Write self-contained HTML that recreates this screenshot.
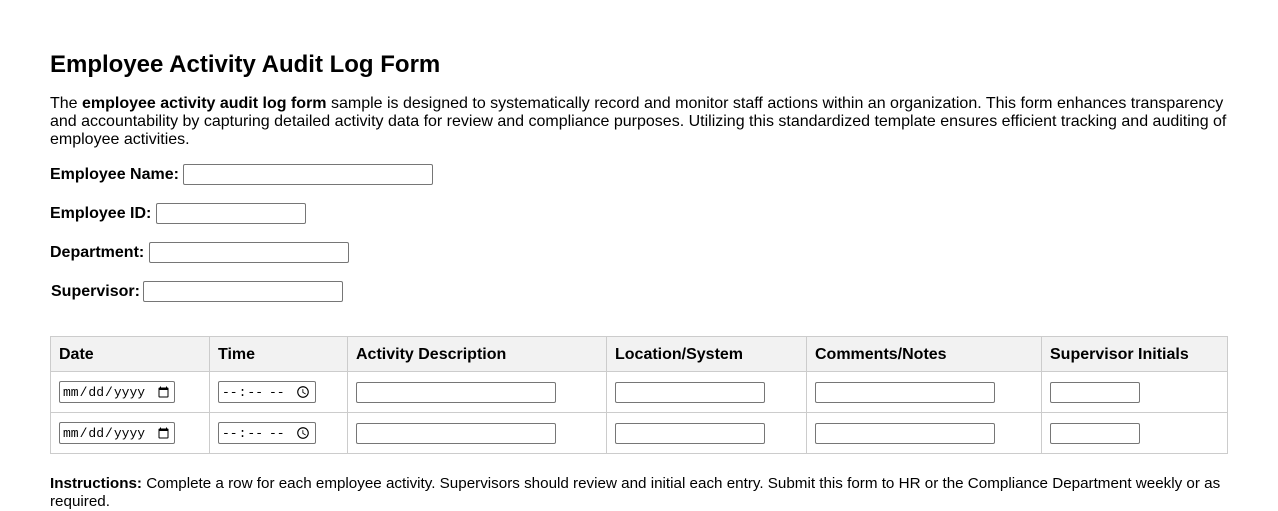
<!DOCTYPE html>
<html><head><meta charset="utf-8"><style>
*{box-sizing:border-box}
body{margin:0;width:1278px;height:501px;overflow:hidden;background:#fff;font-family:"Liberation Sans",Arial,sans-serif;color:#000;position:relative}
h1{position:absolute;left:50px;top:51px;margin:0;font-size:24px;font-weight:bold}
p{position:absolute;left:50px;top:95px;width:1190px;margin:0;font-size:16px;line-height:18px}
.l{position:absolute;font-size:16px;font-weight:bold}
input{position:absolute;height:21px;border:1px solid #767676;border-radius:2px;background:#fff;padding:1px 2px;font-size:13px}
table{position:absolute;left:50px;top:336px;width:1178px;border-collapse:collapse}
td,th{border:1px solid #ccc;padding:0 8px;text-align:left;font-size:16px}
th{background:#f2f2f2;height:35px;font-weight:bold;padding-top:2px}
td{height:41px}
.ins{position:absolute;left:50px;top:475px;width:1180px;font-size:15.2px;line-height:18px}
</style></head><body>
<h1>Employee Activity Audit Log Form</h1>
<p>The <b>employee activity audit log form</b> sample is designed to systematically record and monitor staff actions within an organization. This form enhances transparency and accountability by capturing detailed activity data for review and compliance purposes. Utilizing this standardized template ensures efficient tracking and auditing of employee activities.</p>
<div class="l" style="left:50px;top:166px">Employee Name:</div><input style="left:183px;top:164px;width:250px">
<div class="l" style="left:50px;top:205px">Employee ID:</div><input style="left:156px;top:203px;width:150px">
<div class="l" style="left:50px;top:244px">Department:</div><input style="left:149px;top:242px;width:200px">
<div class="l" style="left:51px;top:283px">Supervisor:</div><input style="left:143px;top:281px;width:200px">
<table>
<tr><th style="width:159px">Date</th><th style="width:138px">Time</th><th style="width:259px">Activity Description</th><th style="width:200px">Location/System</th><th style="width:235px">Comments/Notes</th><th>Supervisor Initials</th></tr>
<tr><td></td><td></td><td></td><td></td><td></td><td></td></tr>
<tr><td></td><td></td><td></td><td></td><td></td><td></td></tr>
</table>
<input type="date" style="left:59px;top:381px;width:116px;height:22px">
<input type="time" style="left:218px;top:381px;width:98px;height:22px">
<input style="left:356px;top:382px;width:200px">
<input style="left:615px;top:382px;width:150px">
<input style="left:815px;top:382px;width:180px">
<input style="left:1050px;top:382px;width:90px">
<input type="date" style="left:59px;top:422px;width:116px;height:22px">
<input type="time" style="left:218px;top:422px;width:98px;height:22px">
<input style="left:356px;top:423px;width:200px">
<input style="left:615px;top:423px;width:150px">
<input style="left:815px;top:423px;width:180px">
<input style="left:1050px;top:423px;width:90px">
<div class="ins"><b>Instructions:</b> Complete a row for each employee activity. Supervisors should review and initial each entry. Submit this form to HR or the Compliance Department weekly or as required.</div>
</body></html>
